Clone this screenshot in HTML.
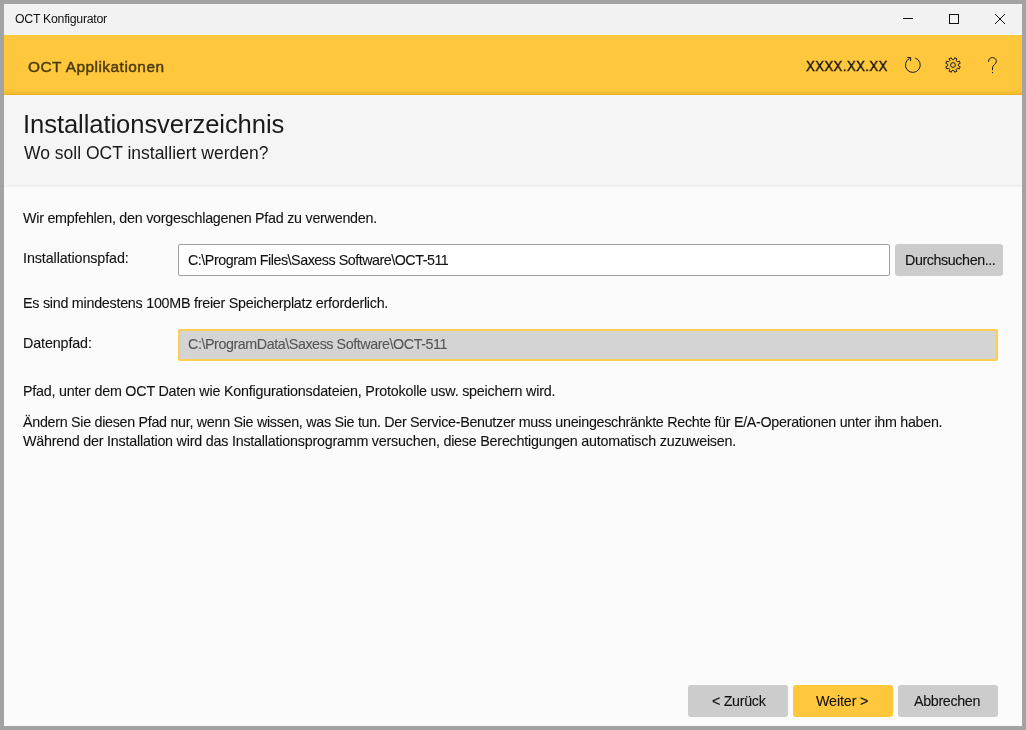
<!DOCTYPE html>
<html><head><meta charset="utf-8">
<style>
*{margin:0;padding:0;box-sizing:border-box}
html,body{width:1026px;height:730px;overflow:hidden;background:#a3a3a3;font-family:"Liberation Sans",sans-serif;color:#111}
.t{-webkit-text-stroke:0.1px currentColor}
.win{position:absolute;left:4px;top:4px;width:1018px;height:722px;background:#fbfbfb;overflow:hidden}
.abs{position:absolute;white-space:nowrap;will-change:transform}
.title{position:absolute;left:0;top:0;width:1018px;height:31px;background:#f2f2f2}
.hdr{position:absolute;left:0;top:31px;width:1018px;height:60px;background:linear-gradient(to bottom,#ffc73b 0,#ffc73b 55px,#f7c035 57px,#ebb52b 60px)}
.panel{position:absolute;left:0;top:91px;width:1018px;height:90px;background:#f5f5f5;box-shadow:0 1px 3px rgba(0,0,0,0.09)}
.t{font-size:13.75px;line-height:16px}
.inp{position:absolute;height:32px;border:1px solid #a0a0a0;border-radius:2px;background:#fff}
.btn{position:absolute;height:32px;border-radius:3px;background:#cccccc}
</style></head><body>
<div class="win">
  <div class="title">
    <div class="abs" style="left:11px;top:7.6px;font-size:12.3px;letter-spacing:-0.27px;line-height:14px;color:#111">OCT Konfigurator</div>
    <svg class="abs" style="left:0;top:0" width="1018" height="31">
      <line x1="899" y1="14.5" x2="909" y2="14.5" stroke="#111" stroke-width="1"/>
      <rect x="945.5" y="10.5" width="9" height="9" fill="none" stroke="#111" stroke-width="1"/>
      <line x1="991" y1="10" x2="1001" y2="20" stroke="#111" stroke-width="1"/>
      <line x1="1001" y1="10" x2="991" y2="20" stroke="#111" stroke-width="1"/>
    </svg>
  </div>
  <div class="hdr">
    <div class="abs" style="left:24px;top:22.5px;font-size:15.4px;line-height:18px;font-weight:400;letter-spacing:0.5px;-webkit-text-stroke:0.45px #4a3a0e;color:#4a3a0e">OCT Applikationen</div>
    <div class="abs" style="left:801.7px;top:21.7px;font-size:15px;line-height:18px;letter-spacing:0.45px;color:#0a0a0a;-webkit-text-stroke:0.35px #0a0a0a;transform:scaleX(0.88);transform-origin:0 0">XXXX.XX.XX</div>
  </div>
  <div class="panel">
    <div class="abs" style="left:19px;top:15px;font-size:25.6px;line-height:28px;letter-spacing:-0.08px;color:#1a1a1a">Installationsverzeichnis</div>
    <div class="abs" style="left:19.5px;top:47.7px;font-size:17.5px;line-height:20px;color:#1a1a1a">Wo soll OCT installiert werden?</div>
  </div>
  <div class="abs t" style="left:19px;top:206.3px;font-size:14.3px;letter-spacing:-0.25px">Wir empfehlen, den vorgeschlagenen Pfad zu verwenden.</div>
  <div class="abs t" style="left:19px;top:245.6px;font-size:14.3px;letter-spacing:-0.09px">Installationspfad:</div>
  <div class="inp" style="left:174px;top:240px;width:712px"></div>
  <div class="abs t" style="left:184px;top:247.7px;font-size:14.3px;letter-spacing:-0.477px">C:\Program Files\Saxess Software\OCT-511</div>
  <div class="btn" style="left:891px;top:240px;width:108px"></div>
  <div class="abs t" style="left:900.5px;top:247.6px;font-size:14.3px;letter-spacing:-0.41px">Durchsuchen...</div>
  <div class="abs t" style="left:19px;top:291px;font-size:14.3px;letter-spacing:-0.25px">Es sind mindestens 100MB freier Speicherplatz erforderlich.</div>
  <div class="abs t" style="left:19px;top:330.7px;font-size:14.3px;letter-spacing:-0.12px">Datenpfad:</div>
  <div class="inp" style="left:174px;top:325px;width:820px;height:32px;border:2px solid #ffcd52;background:#d4d4d4"></div>
  <div class="abs t" style="left:184px;top:331.8px;font-size:14.3px;letter-spacing:-0.432px;color:#555">C:\ProgramData\Saxess Software\OCT-511</div>
  <div class="abs t" style="left:19px;top:378.5px;font-size:14.3px;letter-spacing:-0.208px">Pfad, unter dem OCT Daten wie Konfigurationsdateien, Protokolle usw. speichern wird.</div>
  <div class="abs t" style="left:19px;top:409.7px;font-size:14.3px;letter-spacing:-0.294px">Ändern Sie diesen Pfad nur, wenn Sie wissen, was Sie tun. Der Service-Benutzer muss uneingeschränkte Rechte für E/A-Operationen unter ihm haben.</div>
  <div class="abs t" style="left:19px;top:429.3px;font-size:14.3px;letter-spacing:-0.213px">Während der Installation wird das Installationsprogramm versuchen, diese Berechtigungen automatisch zuzuweisen.</div>
  <div class="btn" style="left:684px;top:681px;width:100px"></div>
  <div class="abs t" style="left:707.6px;top:689px;font-size:14.3px;letter-spacing:-0.314px">&lt; Zurück</div>
  <div class="btn" style="left:789px;top:681px;width:100px;background:#ffc73b"></div>
  <div class="abs t" style="left:812px;top:689px;font-size:14.3px;letter-spacing:-0.129px">Weiter &gt;</div>
  <div class="btn" style="left:894px;top:681px;width:100px"></div>
  <div class="abs t" style="left:910px;top:689px;font-size:14.3px;letter-spacing:-0.35px">Abbrechen</div>
</div>
<svg class="ic" style="position:absolute;left:0;top:0" width="1026" height="730">
  <g fill="none" stroke="#1a1a1a" stroke-width="1">
    <path d="M915.2 58 A7.4 7.4 0 1 1 909.5 58.4"/>
    <path d="M907.2 57.5 L910.6 57.5 L910.6 61"/>
    <path d="M953.80 59.66 L954.73 57.80 L956.87 58.69 L956.21 60.66 L957.34 61.79 L959.31 61.13 L960.20 63.27 L958.34 64.20 L958.34 65.80 L960.20 66.73 L959.31 68.87 L957.34 68.21 L956.21 69.34 L956.87 71.31 L954.73 72.20 L953.80 70.34 L952.20 70.34 L951.27 72.20 L949.13 71.31 L949.79 69.34 L948.66 68.21 L946.69 68.87 L945.80 66.73 L947.66 65.80 L947.66 64.20 L945.80 63.27 L946.69 61.13 L948.66 61.79 L949.79 60.66 L949.13 58.69 L951.27 57.80 L952.20 59.66 Z"/>
    <circle cx="953" cy="65" r="2.45"/>
    <path d="M988.6 61.9 C988.2 59.3 990.2 57.6 992.5 57.6 C994.9 57.6 996.4 59.3 996.4 61.4 C996.4 63.9 992.5 65.2 992.5 67.8 L992.5 70.2"/>
  </g>
  <rect x="992" y="72" width="1.1" height="1.1" fill="#1a1a1a"/>
</svg>
</body></html>
